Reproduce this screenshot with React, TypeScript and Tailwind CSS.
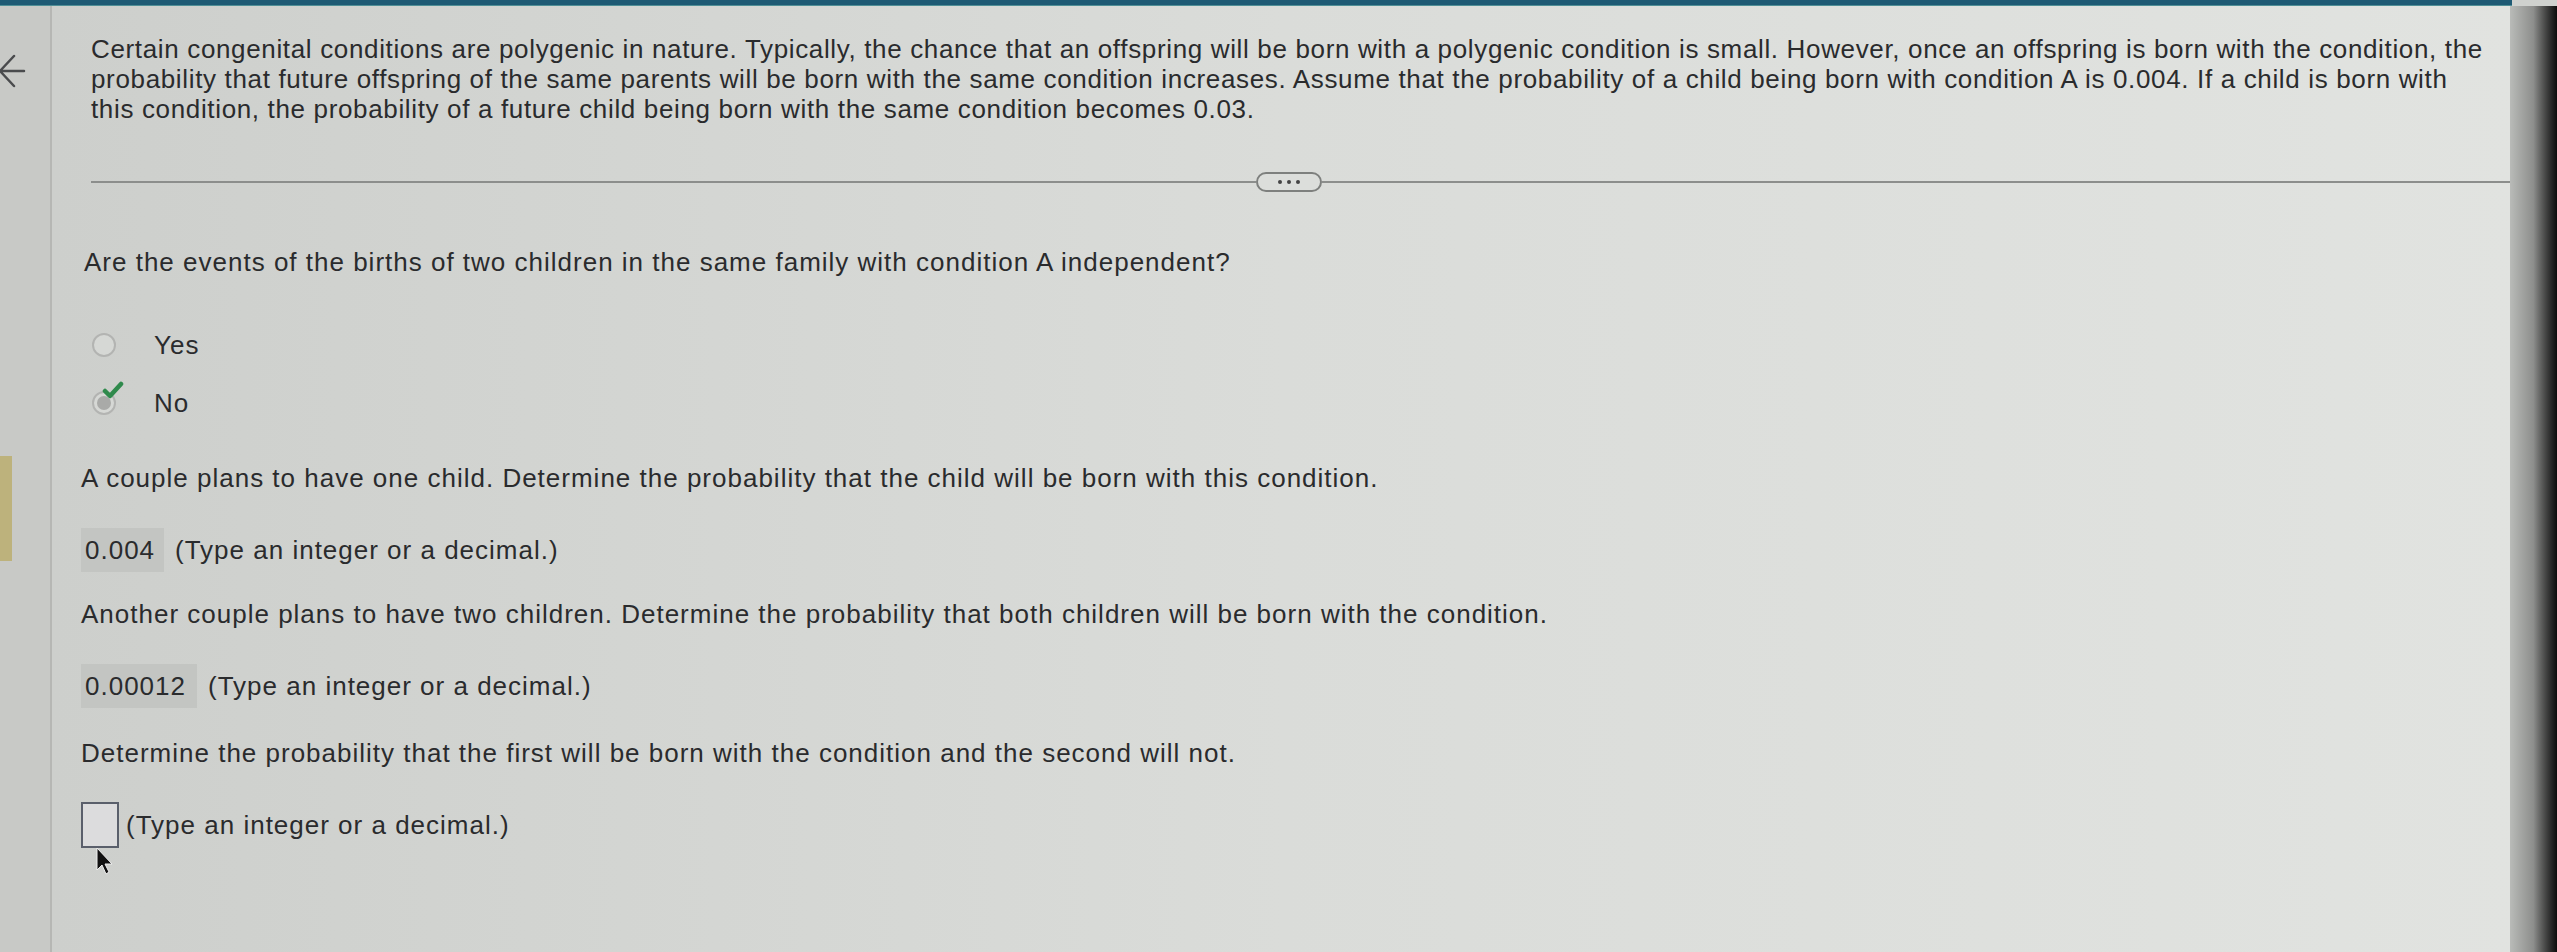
import React from 'react';

const TYPE_HINT = '(Type an integer or a decimal.)';

const Radio: React.FC<{ label: string; checked?: boolean }> = ({ label, checked }) => (
  <div className="flex h-[30px] items-center">
    <div className="relative ml-[8px] h-[24px] w-[24px]">
      <div className="h-full w-full rounded-full border-2 border-[#b3b4b2] bg-[#d6d8d5]" />
      {checked && (
        <>
          <div className="absolute left-[5px] top-[5px] h-[14px] w-[14px] rounded-full bg-[#a9aaa8]" />
          <svg className="absolute -top-[10px] left-[10px]" width="22" height="20" viewBox="0 0 22 20">
            <path d="M3 10 L8 15 L19 3" fill="none" stroke="#2f8a4c" strokeWidth="4.5" strokeLinecap="round" strokeLinejoin="round" />
          </svg>
        </>
      )}
    </div>
    <span className="ml-[38px]">{label}</span>
  </div>
);

const Answer: React.FC<{ value: string; w: string }> = ({ value, w }) => (
  <div className="flex items-center">
    <div className={`flex h-[44px] items-center bg-[#c3c5c2] pl-[4px] ${w}`}>{value}</div>
    <span className="ml-[11px]">{TYPE_HINT}</span>
  </div>
);

export default function App() {
  return (
    <div className="flex h-[952px] w-full flex-col overflow-hidden bg-[#cfd1ce] font-['Liberation_Sans',Arial,sans-serif] text-[26px] leading-[30px] tracking-[0.65px] text-[#2a2b2d]">
      <div className="h-[6px] w-[2512px] bg-[#1e5a74] border-b border-[#4f8f96]" />
      <div className="flex flex-1">
        <div className="relative w-[52px] border-r-2 border-[#b6b7b4] bg-[#c8c9c6]">
          <svg className="absolute left-[-4px] top-[42px]" width="30" height="46" viewBox="0 0 30 46">
            <path d="M28 23 H4 M18 8 L4 23 L18 38" fill="none" stroke="#4a4b4d" strokeWidth="2.5" strokeLinecap="round" />
          </svg>
          <div className="absolute left-0 top-[450px] h-[105px] w-[12px] bg-[#bdb27c]" />
        </div>

        <div className="flex w-[2458px] flex-col bg-linear-to-r from-[#cdcfcc] via-[#dadcd9] to-[#e1e3e0]">
          <p className="ml-[39px] mt-[28px] whitespace-nowrap">
            Certain congenital conditions are polygenic in nature. Typically, the chance that an offspring will be born with a polygenic condition is small. However, once an offspring is born with the condition, the
            <br />
            probability that future offspring of the same parents will be born with the same condition increases. Assume that the probability of a child being born with condition A is 0.004. If a child is born with
            <br />
            this condition, the probability of a future child being born with the same condition becomes 0.03.
          </p>

          <div className="ml-[39px] mt-[48px] flex h-[20px] items-center">
            <div className="h-[2px] w-[1165px] bg-[#8c8e8c]" />
            <div className="flex h-[20px] w-[66px] items-center justify-center gap-[5px] rounded-full border-2 border-[#7e807e] bg-[#dcdedb]">
              <span className="h-[4px] w-[4px] rounded-full bg-[#444]" />
              <span className="h-[4px] w-[4px] rounded-full bg-[#444]" />
              <span className="h-[4px] w-[4px] rounded-full bg-[#444]" />
            </div>
            <div className="h-[2px] flex-1 bg-[#8c8e8c]" />
          </div>

          <div className="ml-[32px] mt-[55px] tracking-[1px]">
            <p>Are the events of the births of two children in the same family with condition A independent?</p>
            <div className="mt-[53px] flex flex-col gap-[28px]">
              <Radio label="Yes" />
              <Radio label="No" checked />
            </div>
          </div>

          <div className="ml-[29px] mt-[45px] flex flex-col tracking-[1px]">
            <p>A couple plans to have one child. Determine the probability that the child will be born with this condition.</p>
            <div className="mt-[35px]">
              <Answer value="0.004" w="w-[83px]" />
            </div>
            <p className="mt-[27px]">Another couple plans to have two children. Determine the probability that both children will be born with the condition.</p>
            <div className="mt-[35px]">
              <Answer value="0.00012" w="w-[116px]" />
            </div>
            <p className="mt-[30px]">Determine the probability that the first will be born with the condition and the second will not.</p>
            <div className="relative mt-[34px] flex items-center">
              <div className="h-[46px] w-[38px] border-2 border-[#5a5f6b] bg-[#dcdcdd]" />
              <span className="ml-[7px]">{TYPE_HINT}</span>
              <svg className="absolute left-[14px] top-[44px]" width="20" height="30" viewBox="0 0 20 30">
                <path d="M2 2 L2 24 L7 19 L11 28 L14 26 L10 18 L17 18 Z" fill="#111" stroke="#eee" strokeWidth="1" />
              </svg>
            </div>
          </div>
        </div>

        <div className="w-[47px] bg-linear-to-r from-[#b9bbb8] via-[#8d8e8c] to-[#0d0d0d]" />
      </div>
    </div>
  );
}
